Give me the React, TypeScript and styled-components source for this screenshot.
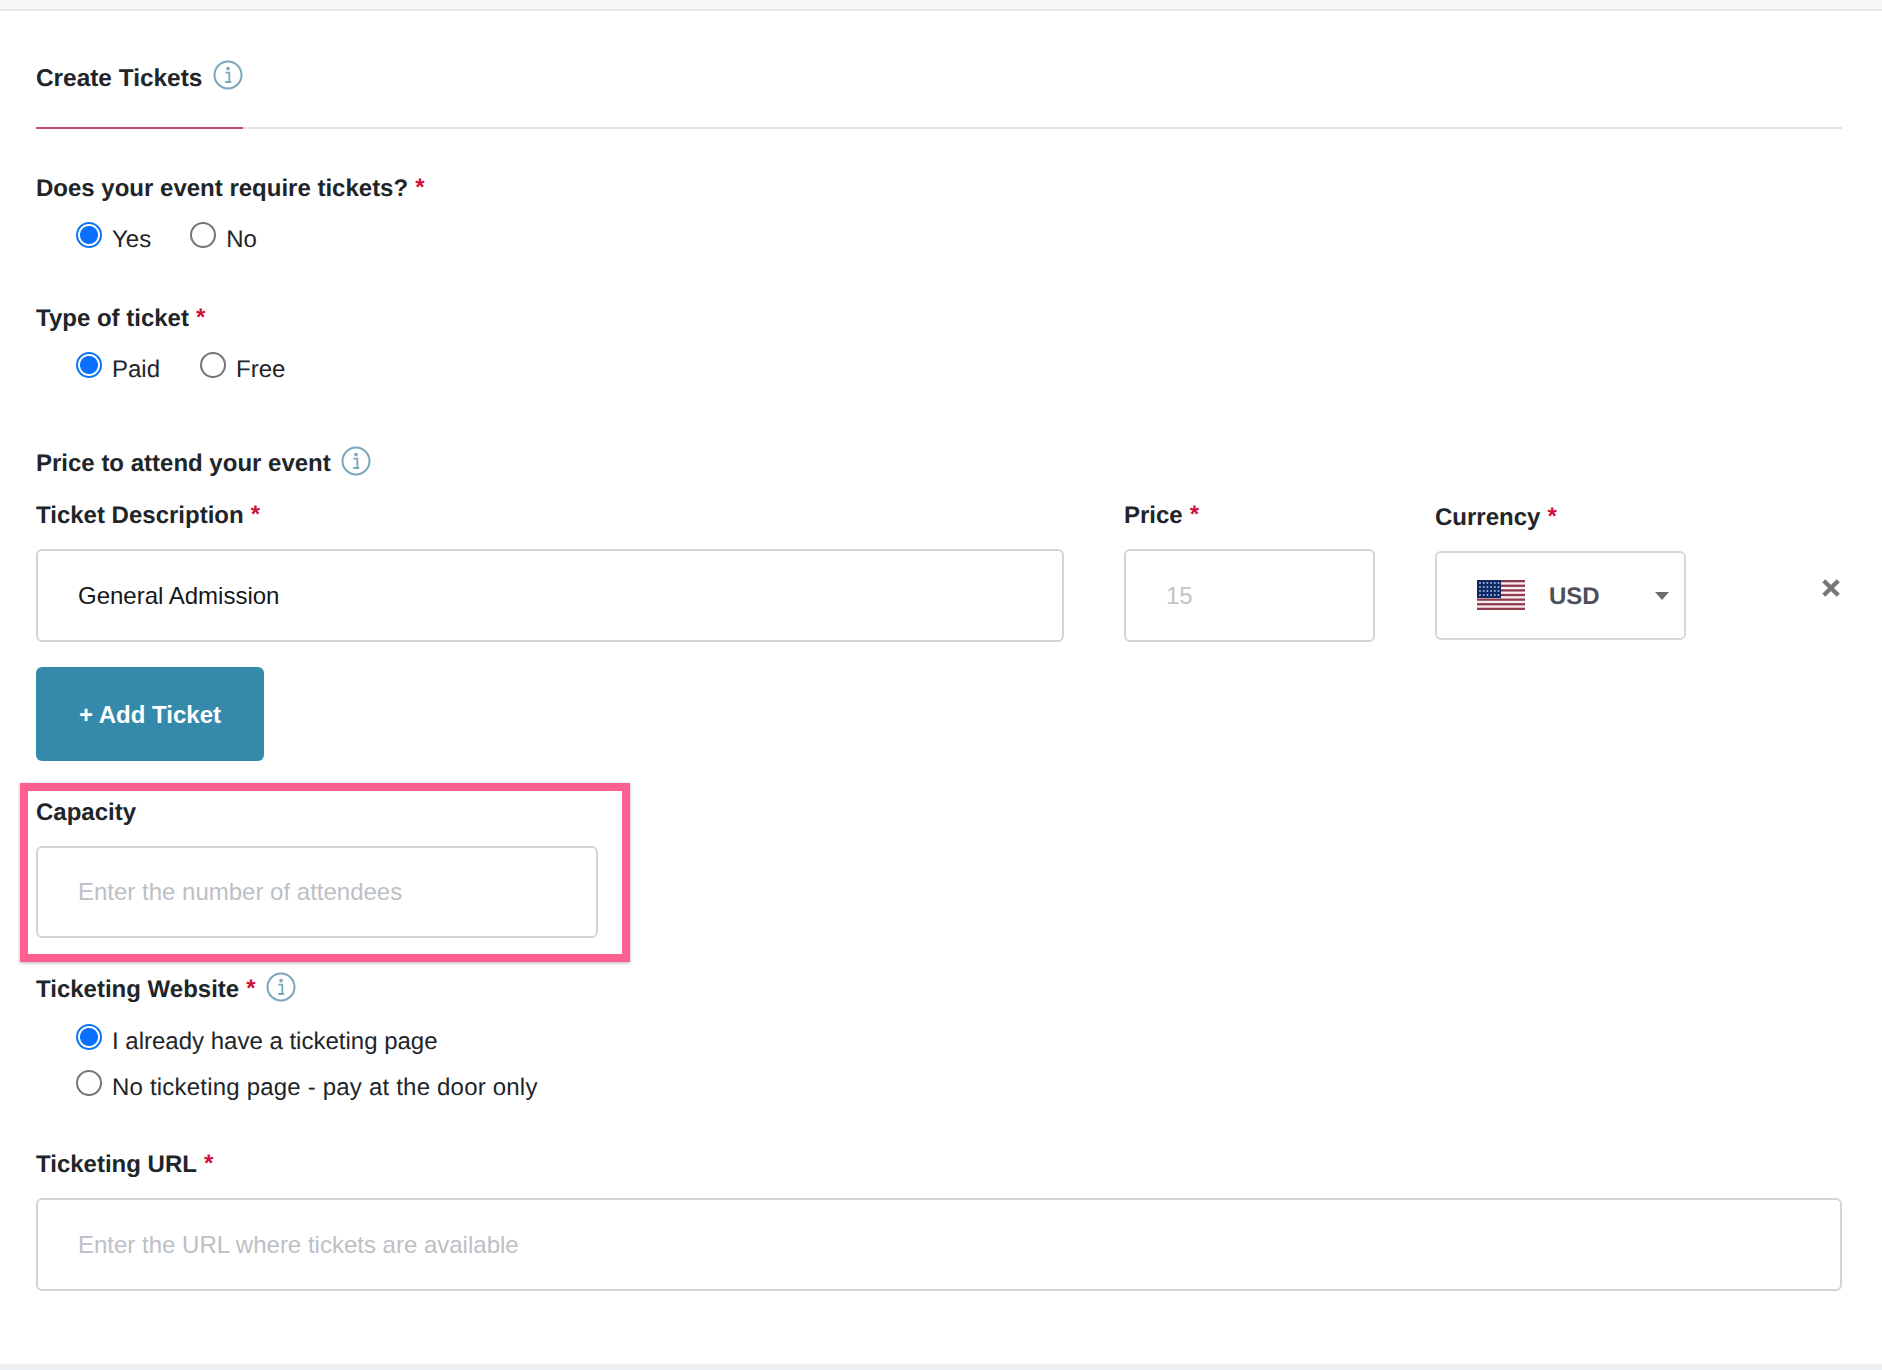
import React from "react";
import styled, { createGlobalStyle } from "styled-components";

const Global = createGlobalStyle`
  html, body { margin: 0; padding: 0; background: #fff; }
  body {
    font-family: "Liberation Sans", Arial, sans-serif;
    color: #212529;
    text-rendering: geometricPrecision;
  }
`;

const Page = styled.div`
  width: 1882px;
  height: 1370px;
  display: flex;
  flex-direction: column;
  overflow: hidden;
  background: #fff;
`;
const TopBand = styled.div`
  height: 9px;
  flex: none;
  background: #f6f7f9;
  border-bottom: 2px solid #e4e6e9;
`;
const BottomBand = styled.div`
  height: 6px;
  flex: none;
  margin-top: auto;
  background: #eef1f4;
`;
const Form = styled.form`
  display: flex;
  flex-direction: column;
  padding: 0 40px 0 36px;
`;
const TabBar = styled.div`
  display: flex;
  margin-top: 52px;
  border-bottom: 2px solid #e3e4e6;
`;
const Tab = styled.div`
  display: flex;
  align-items: flex-start;
  gap: 11px;
  box-sizing: content-box;
  width: 207px;
  height: 63px;
  padding-top: 1px;
  margin-bottom: -2px;
  border-bottom: 2px solid #c4506f;
  font-size: 24.4px;
  font-weight: 700;
  line-height: 30px;
  white-space: nowrap;
`;
const Label = styled.label<{ $top?: number }>`
  display: flex;
  align-items: flex-start;
  margin-top: ${(p) => p.$top ?? 0}px;
  height: 28px;
  font-size: 24px;
  font-weight: 700;
  line-height: 30px;
  color: #212529;
  white-space: nowrap;
`;
const Req = styled.span`
  margin-left: 7px;
  line-height: 28px;
  color: #d0103a;
  font-weight: 700;
`;
const RadioRow = styled.div<{ $top: number; $gap: number }>`
  display: flex;
  gap: ${(p) => p.$gap}px;
  margin-top: ${(p) => p.$top}px;
  padding-left: 40px;
`;
const RadioLabel = styled.span<{ $spacing?: number }>`
  display: flex;
  align-items: flex-start;
  gap: 10px;
  height: 26px;
  font-size: 24px;
  line-height: 36px;
  letter-spacing: ${(p) => p.$spacing ?? 0}px;
  color: #212529;
  white-space: nowrap;
`;
const Radio = styled.input.attrs({ type: "radio" })`
  appearance: none;
  flex: none;
  box-sizing: border-box;
  width: 26px;
  height: 26px;
  margin: 0;
  border-radius: 50%;
  border: 2px solid #767676;
  background: #fff;
  &:checked {
    border-color: #0b76ef;
    background: radial-gradient(circle, #0a6fff 0 8.5px, #fff 9.5px);
  }
`;
const TextInput = styled.input<{ $width?: number; $height?: number; $muted?: boolean }>`
  box-sizing: border-box;
  display: block;
  width: ${(p) => (p.$width ? `${p.$width}px` : "100%")};
  height: ${(p) => p.$height ?? 93}px;
  padding: 0 40px;
  border: 2px solid #d3d4d8;
  border-radius: 6px;
  background: #fff;
  outline: none;
  font-family: inherit;
  font-size: 24px;
  color: ${(p) => (p.$muted ? "#c0c3c8" : "#15171a")};
  &::placeholder {
    color: #bcc0c5;
    opacity: 1;
  }
`;
const TicketRow = styled.div`
  display: flex;
  align-items: flex-start;
  margin-top: 24px;
`;
const Field = styled.div<{ $gap?: number; $left?: number; $top?: number }>`
  display: flex;
  flex-direction: column;
  gap: ${(p) => p.$gap ?? 20}px;
  margin-left: ${(p) => p.$left ?? 0}px;
  margin-top: ${(p) => p.$top ?? 0}px;
`;
const CurrencyBox = styled.div`
  box-sizing: border-box;
  display: flex;
  align-items: center;
  width: 251px;
  height: 89px;
  padding-left: 40px;
  border: 2px solid #d6d7da;
  border-radius: 6px;
  background: #fff;
`;
const FlagIcon = styled.svg`
  flex: none;
  margin-top: -2px;
`;
const CurrencyCode = styled.span`
  margin-left: 24px;
  padding-top: 2px;
  font-size: 24px;
  font-weight: 700;
  color: #4b4f56;
`;
const Caret = styled.span`
  margin-left: 55px;
  width: 0;
  height: 0;
  border-left: 7px solid transparent;
  border-right: 7px solid transparent;
  border-top: 8px solid #6c6c6c;
`;
const Remove = styled.button`
  display: flex;
  margin: 78px 2px 0 auto;
  padding: 0;
  border: 0;
  background: none;
  color: #777;
`;
const AddButton = styled.button`
  align-self: flex-start;
  width: 228px;
  height: 94px;
  margin-top: 25px;
  padding: 2px 0 0;
  border: 0;
  border-radius: 6px;
  background: #358aab;
  color: #fff;
  font-family: inherit;
  font-size: 24px;
  font-weight: 700;
`;
const CapacityBlock = styled.div`
  position: relative;
  width: 562px;
  margin-top: 37px;
`;
const Highlight = styled.div`
  position: absolute;
  left: -16px;
  top: -15px;
  width: 610px;
  height: 179px;
  box-sizing: border-box;
  border: 8px solid #fd6090;
  box-shadow: 0 1px 3px rgba(0, 0, 0, 0.3);
  pointer-events: none;
`;
const InfoIcon = styled.svg<{ $lift: number; $left?: number }>`
  flex: none;
  margin-top: -${(p) => p.$lift}px;
  margin-left: ${(p) => p.$left ?? 10}px;
`;

const Info = ({ lift = 3, left }: { lift?: number; left?: number }) => (
  <InfoIcon $lift={lift} $left={left} width="30" height="30" viewBox="0 0 30 30" fill="none">
    <circle cx="15" cy="15" r="13.5" stroke="#7aa6bd" strokeWidth="2" />
    <circle cx="15" cy="8.6" r="1.8" fill="#7aa6bd" />
    <path d="M12.4 12.6h3.9v9.2M12.2 22h6" stroke="#7aa6bd" strokeWidth="1.8" />
  </InfoIcon>
);

const Flag = () => (
  <FlagIcon width="48" height="30" viewBox="0 0 48 30">
    <rect width="48" height="30" fill="#fbeef0" />
    {Array.from({ length: 7 }, (_, i) => (
      <rect key={i} y={i * 4.62} width="48" height="2.31" fill="#8e3d4f" />
    ))}
    <rect width="24" height="18" fill="#0f2a63" />
    {Array.from({ length: 4 }, (_, r) =>
      Array.from({ length: 6 }, (_, c) => (
        <rect key={`${r}-${c}`} x={2.2 + c * 3.7} y={2.2 + r * 4} width="1.6" height="1.6" fill="#b9cdf5" />
      ))
    )}
  </FlagIcon>
);

const Close = () => (
  <svg width="18" height="18" viewBox="0 0 18 18" fill="none">
    <path d="M1.8 1.8l14.4 14.4M16.2 1.8l-14.4 14.4" stroke="currentColor" strokeWidth="4.4" />
  </svg>
);

export default function App() {
  return (
    <Page>
      <Global />
      <TopBand />
      <Form>
        <TabBar>
          <Tab>
            Create Tickets
            <Info lift={4} left={0} />
          </Tab>
        </TabBar>

        <Label $top={45}>
          Does your event require tickets?<Req>*</Req>
        </Label>
        <RadioRow $top={20} $gap={39}>
          <RadioLabel>
            <Radio name="req" defaultChecked />
            Yes
          </RadioLabel>
          <RadioLabel>
            <Radio name="req" />
            No
          </RadioLabel>
        </RadioRow>

        <Label $top={56}>
          Type of ticket<Req>*</Req>
        </Label>
        <RadioRow $top={20} $gap={40}>
          <RadioLabel>
            <Radio name="type" defaultChecked />
            Paid
          </RadioLabel>
          <RadioLabel>
            <Radio name="type" />
            Free
          </RadioLabel>
        </RadioRow>

        <Label $top={71}>
          Price to attend your event
          <Info />
        </Label>

        <TicketRow>
          <Field>
            <Label>
              Ticket Description<Req>*</Req>
            </Label>
            <TextInput $width={1028} defaultValue="General Admission" />
          </Field>
          <Field $left={60}>
            <Label>
              Price<Req>*</Req>
            </Label>
            <TextInput $width={251} $muted defaultValue="15" />
          </Field>
          <Field $left={60} $top={2}>
            <Label>
              Currency<Req>*</Req>
            </Label>
            <CurrencyBox>
              <Flag />
              <CurrencyCode>USD</CurrencyCode>
              <Caret />
            </CurrencyBox>
          </Field>
          <Remove type="button" aria-label="Remove">
            <Close />
          </Remove>
        </TicketRow>

        <AddButton type="button">+ Add Ticket</AddButton>

        <CapacityBlock>
          <Highlight />
          <Field $gap={20}>
            <Label>Capacity</Label>
            <TextInput $height={92} placeholder="Enter the number of attendees" />
          </Field>
        </CapacityBlock>

        <Label $top={37}>
          Ticketing Website<Req>*</Req>
          <Info />
        </Label>
        <RadioRow $top={21} $gap={0}>
          <RadioLabel>
            <Radio name="site" defaultChecked />I already have a ticketing page
          </RadioLabel>
        </RadioRow>
        <RadioRow $top={20} $gap={0}>
          <RadioLabel $spacing={0.2}>
            <Radio name="site" />
            No ticketing page - pay at the door only
          </RadioLabel>
        </RadioRow>

        <Field $gap={20} $top={54}>
          <Label>
            Ticketing URL<Req>*</Req>
          </Label>
          <TextInput placeholder="Enter the URL where tickets are available" />
        </Field>
      </Form>
      <BottomBand />
    </Page>
  );
}
